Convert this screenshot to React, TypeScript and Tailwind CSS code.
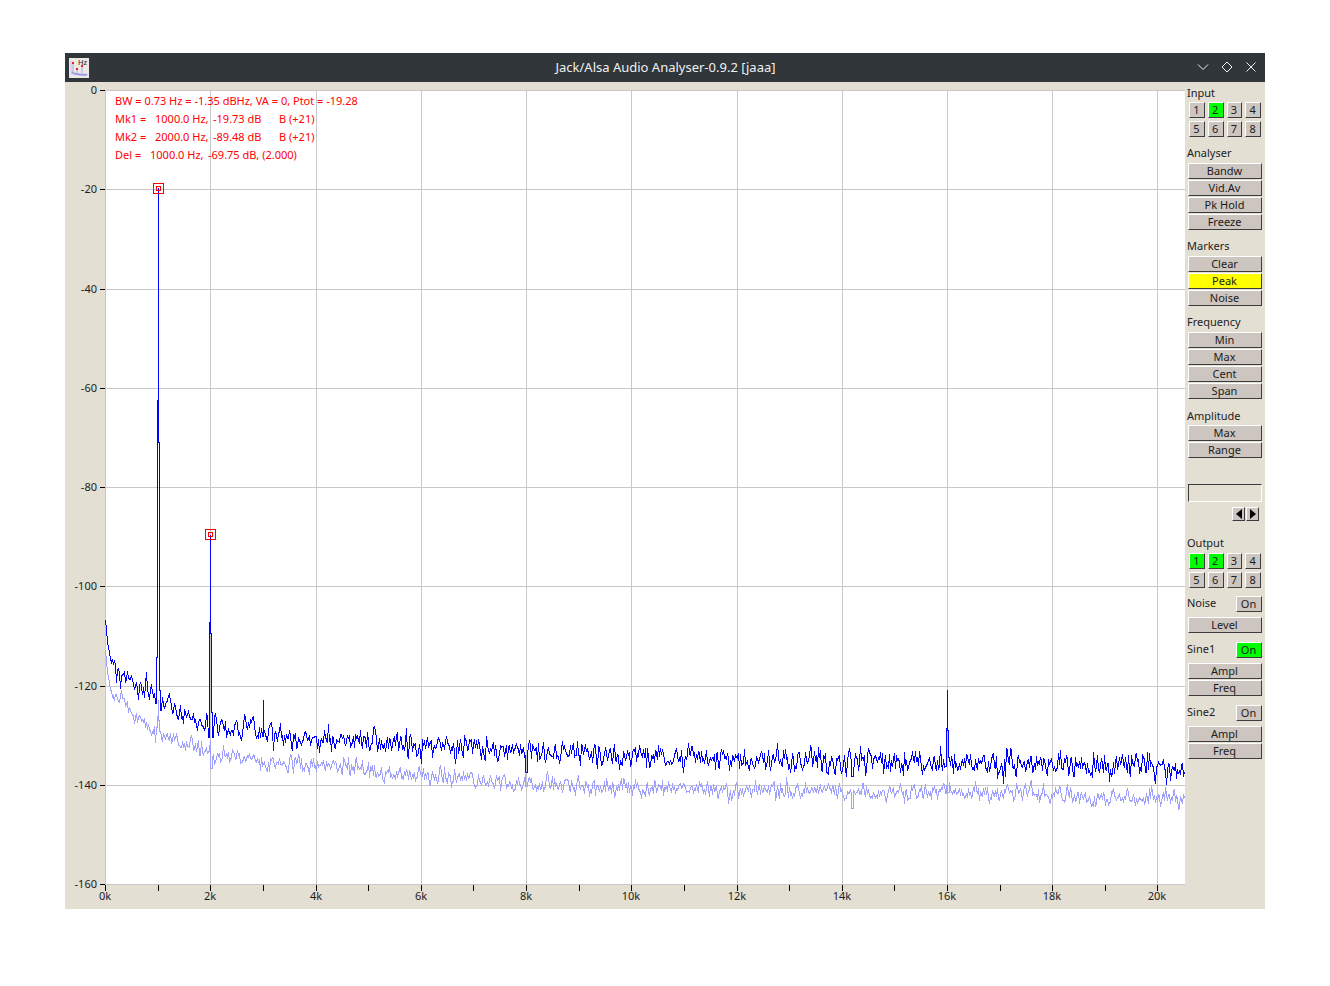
import React from 'react';

const FONT = '"Noto Sans", sans-serif';

// plot geometry in page pixels
const PX_LEFT = 105;
const PX_RIGHT = 1185;
const PY_TOP = 90;
const PY_BOTTOM = 884;
const KHZ = 52.62;
const DB20 = (PY_BOTTOM - PY_TOP) / 8;

const UPPER: [number, number][] = [
  [105, 620], [107, 642], [110, 660], [115, 668], [120, 678], [130, 683], [150, 692], [165, 706],
  [190, 715], [210, 724], [240, 728], [280, 733], [300, 737], [350, 739], [400, 745], [500, 750],
  [600, 754], [700, 758], [800, 760], [900, 761], [1000, 764], [1100, 765], [1185, 769],
];
const LOWER: [number, number][] = [
  [105, 650], [107, 672], [110, 690], [115, 696], [125, 706], [140, 722], [150, 733], [165, 737],
  [190, 746], [210, 753], [250, 759], [300, 765], [350, 768], [400, 773], [500, 782], [600, 787],
  [700, 789], [800, 791], [900, 792], [1000, 794], [1100, 797], [1185, 799],
];

function rng(seed: number) {
  let s = seed;
  return () => {
    s = (s * 1664525 + 1013904223) >>> 0;
    return s / 4294967296;
  };
}

function interp(knots: [number, number][], x: number) {
  for (let i = 1; i < knots.length; i++) {
    if (x <= knots[i][0]) {
      const [x0, y0] = knots[i - 1];
      const [x1, y1] = knots[i];
      return y0 + ((y1 - y0) * (x - x0)) / (x1 - x0);
    }
  }
  return knots[knots.length - 1][1];
}

// spikes are drawn as square steps so they stay one pixel wide per column
function trace(knots: [number, number][], seed: number, amp: number, spikes: Record<number, number>) {
  const r = rng(seed);
  let prev = 0;
  let lastY = knots[0][1];
  let d = `M${PX_LEFT + 0.5} ${lastY}`;
  for (let x = PX_LEFT + 1; x < PX_RIGHT; x++) {
    const n = (r() + r() + r() - 1.5) * amp;
    prev = n + prev * 0.15;
    const fade = x < 112 ? 0.15 : 1;
    const spike = spikes[x];
    const y = spike ?? Math.round(interp(knots, x) + prev * fade);
    if (spike !== undefined || spikes[x - 1] !== undefined) {
      d += y < lastY ? ` H${x + 0.5} V${y}` : ` V${y} H${x + 0.5}`;
    } else {
      d += ` L${x + 0.5} ${y}`;
    }
    lastY = y;
  }
  return d;
}

const upperPath = trace(UPPER, 11, 13, {
  156: 657, 157: 400, 158: 188, 159: 442, 160: 690,
  209: 622, 210: 535, 211: 633, 212: 712,
  263: 700, 526: 772, 852: 776,
  946: 728, 947: 690, 948: 730,
});
const lowerPath = trace(LOWER, 5, 10, {
  157: 716, 158: 700, 159: 720,
  209: 745, 210: 740, 211: 768,
  526: 786, 852: 808,
  946: 785, 947: 775, 948: 792,
});

const dbLabels = [0, -20, -40, -60, -80, -100, -120, -140, -160];
const kLabels = [0, 2, 4, 6, 8, 10, 12, 14, 16, 18, 20];
const kTicks = Array.from({ length: 21 }, (_, i) => i);

function kx(k: number) {
  return Math.round(PX_LEFT + 0.08 + k * KHZ);
}

function Marker({ x, y }: { x: number; y: number }) {
  return (
    <g fill="none" stroke="#ff0000" shapeRendering="crispEdges">
      <rect x={x - 5 + 0.5} y={y - 5 + 0.5} width={10} height={10} />
      <rect x={x - 2 + 0.5} y={y - 2 + 0.5} width={4} height={4} />
    </g>
  );
}

function Plot() {
  return (
    <svg width={1120} height={827} viewBox="65 82 1120 827" style={{ fontFamily: FONT }} className="block">
      <rect x={PX_LEFT} y={PY_TOP} width={PX_RIGHT - PX_LEFT} height={PY_BOTTOM - PY_TOP} fill="#ffffff" />
      <g stroke="#c8c8c8" shapeRendering="crispEdges">
        {dbLabels.map((_, i) => {
          const y = Math.round(PY_TOP + i * DB20) + 0.5;
          return <line key={i} x1={PX_LEFT} x2={PX_RIGHT} y1={y} y2={y} />;
        })}
        {kLabels.map((k) => (
          <line key={k} x1={kx(k) + 0.5} x2={kx(k) + 0.5} y1={PY_TOP} y2={PY_BOTTOM} />
        ))}
      </g>
      <g stroke="#000000" shapeRendering="crispEdges">
        {dbLabels.map((_, i) => {
          const y = Math.round(PY_TOP + i * DB20) + 0.5;
          return <line key={i} x1={100} x2={105} y1={y} y2={y} />;
        })}
        {kTicks.map((k) => (
          <line key={k} x1={kx(k) + 0.5} x2={kx(k) + 0.5} y1={885} y2={891} />
        ))}
      </g>
      <g fontSize={11} fill="#1c1c1c">
        {dbLabels.map((db, i) => (
          <text key={db} x={97} y={Math.round(PY_TOP + i * DB20) + 4} textAnchor="end">{db}</text>
        ))}
        {kLabels.map((k) => (
          <text key={k} x={kx(k)} y={900} textAnchor="middle">{k}k</text>
        ))}
      </g>
      <path d={lowerPath} fill="none" stroke="#a0a0ff" shapeRendering="crispEdges" />
      <path d={upperPath} fill="none" stroke="#0000ff" shapeRendering="crispEdges" />
      <Marker x={158} y={188} />
      <Marker x={210} y={534} />
      <g fontSize={11} fill="#ff0000">
        <text x={115} y={105}>BW = 0.73 Hz = -1.35 dBHz, VA = 0, Ptot = -19.28</text>
        <text x={115} y={123}>Mk1 =</text>
        <text x={155} y={123}>1000.0 Hz,</text>
        <text x={213} y={123}>-19.73 dB</text>
        <text x={279} y={123}>B (+21)</text>
        <text x={115} y={141}>Mk2 =</text>
        <text x={155} y={141}>2000.0 Hz,</text>
        <text x={213} y={141}>-89.48 dB</text>
        <text x={279} y={141}>B (+21)</text>
        <text x={115} y={159}>Del =</text>
        <text x={150} y={159}>1000.0 Hz,</text>
        <text x={208} y={159}>-69.75 dB, (2.000)</text>
      </g>
    </svg>
  );
}

function AppIcon() {
  return (
    <svg width={20} height={20} viewBox="0 0 20 20" style={{ fontFamily: FONT }}>
      <rect width={20} height={20} fill="#ece8e4" />
      <path d="M2 3V16H19" fill="none" stroke="#c9c4e6" />
      <path d="M3 14Q6 17 18 17" fill="none" stroke="#8f8fe8" strokeWidth={1.5} />
      <path d="M4 5V15M8 11V15M13 8V15" stroke="#a9a9ee" />
      <rect x={3} y={4} width={2} height={2} fill="#e8202a" />
      <rect x={7} y={10} width={2} height={2} fill="#e8202a" />
      <rect x={12} y={7} width={2} height={2} fill="#e8202a" />
      <text x={9} y={7} fontSize={7.5} fill="#222222">Hz</text>
    </svg>
  );
}

function TitleBar() {
  return (
    <div className="relative flex h-[29px] items-center bg-[#31363b] px-[4px]">
      <AppIcon />
      <div className="flex-1 pr-[19px] text-center text-[13px] text-[#eff0f1]">Jack/Alsa Audio Analyser-0.9.2 [jaaa]</div>
      <div className="absolute right-[7px] top-[7px] flex gap-[10px] text-[#eff0f1]">
        <svg width={14} height={14} viewBox="0 0 14 14" fill="none" stroke="currentColor"><path d="M2 4.5L7 9.5L12 4.5" /></svg>
        <svg width={14} height={14} viewBox="0 0 14 14" fill="none" stroke="currentColor"><path d="M7 2L12 7L7 12L2 7Z" /></svg>
        <svg width={14} height={14} viewBox="0 0 14 14" fill="none" stroke="currentColor"><path d="M2.5 2.5L11.5 11.5M11.5 2.5L2.5 11.5" /></svg>
      </div>
    </div>
  );
}

function Btn({ label, bg = 'bg-[#cdc5bf]', className = 'w-full' }: { label: string; bg?: string; className?: string }) {
  return (
    <div
      className={`flex h-[16px] items-center justify-center border border-t-white border-l-white border-r-[#3c3c3c] border-b-[#3c3c3c] pb-[2px] pr-[1px] text-[11px] leading-none text-[#1c1c1c] ${bg} ${className}`}
    >
      {label}
    </div>
  );
}

function Label({ text, className = '' }: { text: string; className?: string }) {
  return <div className={`h-[13px] pl-[2px] text-[11px] leading-[11px] text-[#1c1c1c] ${className}`}>{text}</div>;
}

function BtnStack({ items, active, className = '' }: { items: string[]; active?: string; className?: string }) {
  return (
    <div className={`flex flex-col gap-[1px] pl-[3px] pr-[3px] ${className}`}>
      {items.map((t) => (
        <Btn key={t} label={t} bg={t === active ? 'bg-[#ffff00]' : 'bg-[#cdc5bf]'} />
      ))}
    </div>
  );
}

function NumGrid({ on, className = '' }: { on: number[]; className?: string }) {
  return (
    <div className={`grid grid-cols-4 gap-x-[3px] gap-y-[3px] pl-[4px] pr-[4px] ${className}`}>
      {[1, 2, 3, 4, 5, 6, 7, 8].map((n) => (
        <Btn key={n} label={String(n)} bg={on.includes(n) ? 'bg-[#00ff00]' : 'bg-[#cdc5bf]'} />
      ))}
    </div>
  );
}

function OnRow({ label, on, className = '' }: { label: string; on?: boolean; className?: string }) {
  return (
    <div className={`flex h-[16px] items-start justify-between pr-[3px] ${className}`}>
      <Label text={label} className="mt-[1px]" />
      <Btn label="On" bg={on ? 'bg-[#00ff00]' : 'bg-[#cdc5bf]'} className="w-[26px]" />
    </div>
  );
}

function Sidebar() {
  return (
    <div className="flex w-[80px] flex-col pt-[5px]">
      <Label text="Input" />
      <NumGrid on={[2]} className="mt-[2px]" />
      <Label text="Analyser" className="mt-[10px]" />
      <BtnStack items={['Bandw', 'Vid.Av', 'Pk Hold', 'Freeze']} className="mt-[3px]" />
      <Label text="Markers" className="mt-[10px]" />
      <BtnStack items={['Clear', 'Peak', 'Noise']} active="Peak" className="mt-[3px]" />
      <Label text="Frequency" className="mt-[10px]" />
      <BtnStack items={['Min', 'Max', 'Cent', 'Span']} className="mt-[3px]" />
      <Label text="Amplitude" className="mt-[11px]" />
      <BtnStack items={['Max', 'Range']} className="mt-[2px]" />
      <div className="mx-[3px] mt-[26px] h-[18px] border border-t-[#3c3c3c] border-l-[#3c3c3c] border-r-white border-b-white" />
      <div className="mt-[5px] flex justify-end gap-[1px] pr-[6px]">
        <div className="flex h-[14px] w-[13px] items-center justify-center border border-t-white border-l-white border-r-[#3c3c3c] border-b-[#3c3c3c] bg-[#cdc5bf]">
          <svg width={6} height={10} viewBox="0 0 6 10"><path d="M6 0V10L0 5Z" fill="#000000" /></svg>
        </div>
        <div className="flex h-[14px] w-[13px] items-center justify-center border border-t-white border-l-white border-r-[#3c3c3c] border-b-[#3c3c3c] bg-[#cdc5bf]">
          <svg width={6} height={10} viewBox="0 0 6 10"><path d="M0 0V10L6 5Z" fill="#000000" /></svg>
        </div>
      </div>
      <Label text="Output" className="mt-[16px]" />
      <NumGrid on={[1, 2]} className="mt-[3px]" />
      <OnRow label="Noise" className="mt-[8px]" />
      <BtnStack items={['Level']} className="mt-[5px]" />
      <OnRow label="Sine1" on className="mt-[9px]" />
      <BtnStack items={['Ampl', 'Freq']} className="mt-[5px]" />
      <OnRow label="Sine2" className="mt-[9px]" />
      <BtnStack items={['Ampl', 'Freq']} className="mt-[5px]" />
    </div>
  );
}

export default function App() {
  return (
    <div className="min-h-[986px] bg-white pl-[65px] pt-[53px]" style={{ fontFamily: FONT }}>
      <div className="flex h-[856px] w-[1200px] flex-col bg-[#e3dfd3]">
        <TitleBar />
        <div className="flex flex-1">
          <Plot />
          <Sidebar />
        </div>
      </div>
    </div>
  );
}
